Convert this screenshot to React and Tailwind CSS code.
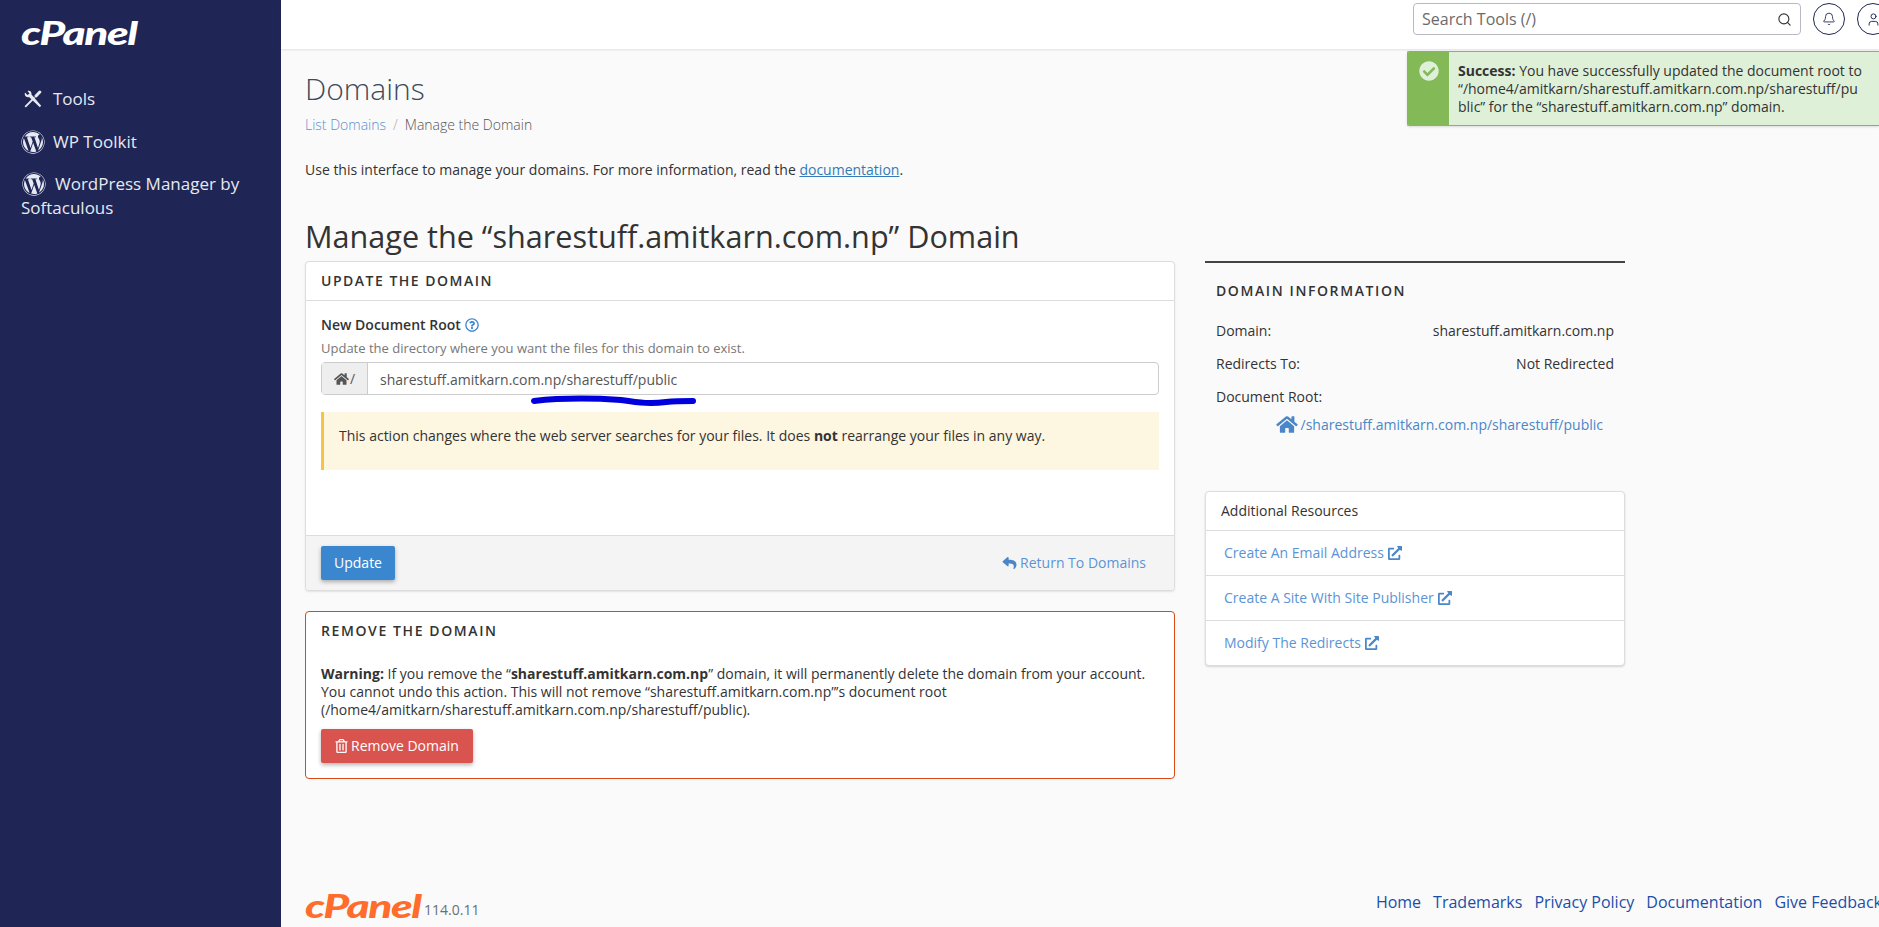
import React from 'react'
import { FaHome, FaWordpress, FaReply, FaExternalLinkAlt, FaCheckCircle, FaRegTrashAlt, FaRegQuestionCircle } from 'react-icons/fa'
import { Search, Bell, User } from 'lucide-react'

function Tools() {
  return (
    <svg width="18" height="18" viewBox="0 0 18 18" fill="none" stroke="currentColor">
      <path d="M1 2.5 L3.5 5 L5.5 3.5 L3.5 1 C5.5 0 8 1.5 7.5 4.5 L17.2 15.8 L15.8 17.2 L5 7 C2 8 0 5 1 2.5 Z" fill="currentColor" stroke="none" />
      <path d="M1.2 16.8 L10.5 7.5" strokeWidth="1.8" />
      <path d="M12 6 L15.8 2" strokeWidth="3" strokeLinecap="round" />
    </svg>
  )
}

const resources = ['Create An Email Address', 'Create A Site With Site Publisher', 'Modify The Redirects']
const footerLinks = ['Home', 'Trademarks', 'Privacy Policy', 'Documentation', 'Give Feedback']

export default function App() {
  return (
    <div className="flex h-[927px] w-[1879px] overflow-hidden bg-[#fafafa] font-['Open_Sans',sans-serif] text-[14px] leading-[18px] text-[#333]">
      {/* Sidebar */}
      <aside className="flex w-[281px] shrink-0 flex-col bg-[#1f2554] px-[21px] pt-[18px] text-[#e6e9f2]">
        <div className="h-[30px] origin-left scale-x-[1.38] font-['Lato',sans-serif] text-[32px] leading-[30px] font-black italic tracking-[-1px] text-white">cPanel</div>
        <nav className="mt-[29px] flex flex-col text-[17px] leading-[24px]">
          <div className="flex h-[43px] items-center gap-[11px] pl-[3px]">
            <Tools />
            <span>Tools</span>
          </div>
          <div className="flex h-[43px] items-center gap-[8px]">
            <FaWordpress className="h-6 w-6" />
            <span>WP Toolkit</span>
          </div>
          <div className="pt-[9px]">
            <FaWordpress className="mr-[9px] ml-[1px] inline-block h-6 w-6 align-[-6px]" />
            WordPress Manager by Softaculous
          </div>
        </nav>
      </aside>

      <div className="relative flex min-w-0 flex-1 flex-col">
        {/* Header */}
        <header className="flex h-[49px] shrink-0 items-start justify-end gap-[12px] bg-white pt-[3px] shadow-[0_1px_2px_rgba(0,0,0,0.1)]">
          <div className="flex h-[32px] w-[388px] items-center justify-between rounded border border-[#b9b9c6] px-[8px] text-[16px] text-[#6b6b6b]">
            <span>Search Tools (/)</span>
            <Search className="h-[15px] w-[15px] text-[#333]" strokeWidth={1.8} />
          </div>
          <div className="flex h-[32px] w-[32px] shrink-0 items-center justify-center rounded-full border border-[#1f2554] text-[#1f2554]">
            <Bell className="h-[14px] w-[14px]" strokeWidth={1.5} />
          </div>
          <div className="-mr-[10px] flex h-[32px] w-[32px] shrink-0 items-center justify-center rounded-full border border-[#1f2554] text-[#1f2554]">
            <User className="h-[15px] w-[15px]" strokeWidth={1.5} />
          </div>
        </header>

        {/* Success notice */}
        <div className="absolute top-[51px] right-0 z-10 flex h-[75px] w-[472px] overflow-hidden rounded-l-[2px] border border-r-0 border-[#83b956] bg-[#dff0d8] shadow-sm">
          <div className="flex w-[41px] shrink-0 justify-center bg-[#83b956] pt-[9px]">
            <FaCheckCircle className="h-[20px] w-[20px] text-[#dff0d8]" />
          </div>
          <p className="pt-[10px] pl-[9px] whitespace-nowrap">
            <b className="font-bold">Success:</b> You have successfully updated the document root to<br />
            “/home4/amitkarn/sharestuff.amitkarn.com.np/sharestuff/pu<br />
            blic” for the “sharestuff.amitkarn.com.np” domain.
          </p>
        </div>

        {/* Content */}
        <main className="flex min-h-0 flex-1 flex-col pl-[24px]">
          <h1 className="mt-[19px] text-[30px] leading-[42px] font-light text-[#3c4a5c]">Domains</h1>
          <div className="mt-[6px] flex gap-[7px] text-[14px] font-light">
            <a className="text-[#5b8fd0]">List Domains</a>
            <span className="text-[#aaa]">/</span>
            <span className="text-[#555]">Manage the Domain</span>
          </div>
          <p className="mt-[27px]">
            Use this interface to manage your domains. For more information, read the <a className="text-[#337ab7] underline">documentation</a>.
          </p>
          <h2 className="mt-[36px] text-[30.6px] leading-[42px] text-[#333]">Manage the “sharestuff.amitkarn.com.np” Domain</h2>

          <div className="mt-[4px] flex items-start gap-[30px]">
            {/* Left column */}
            <div className="flex w-[870px] shrink-0 flex-col gap-[20px]">
              <section className="overflow-hidden rounded border border-[#ddd] bg-white shadow-[0_1px_2px_rgba(0,0,0,0.1)]">
                <div className="flex h-[39px] items-center border-b border-[#ddd] px-[15px] text-[14px] font-semibold tracking-[1.5px] text-[#333]">UPDATE THE DOMAIN</div>
                <div className="h-[234px] px-[15px] pt-[15px]">
                  <div className="flex items-center gap-[4px] font-semibold text-[#333]">
                    New Document Root <FaRegQuestionCircle className="h-[14px] w-[14px] text-[#3c85cf]" />
                  </div>
                  <div className="mt-[5px] text-[13px] text-[#777]">Update the directory where you want the files for this domain to exist.</div>
                  <div className="relative mt-[5px] flex h-[33px] rounded border border-[#ccc]">
                    <div className="flex w-[46px] items-center justify-center gap-[1px] border-r border-[#ccc] bg-[#eee] text-[#555]">
                      <FaHome className="h-[14px] w-[15px]" /><span>/</span>
                    </div>
                    <div className="flex items-center pt-[2px] pl-[12px] text-[14px] text-[#555]">sharestuff.amitkarn.com.np/sharestuff/public</div>
                    <svg className="absolute top-[31px] left-[209px]" width="166" height="14" viewBox="0 0 166 14" fill="none">
                      <path d="M3 7 C 30 4, 60 4, 90 6 C 110 9, 120 10, 135 8 C 145 7, 155 7, 162 7" stroke="#0000dc" strokeWidth="6" strokeLinecap="round" />
                    </svg>
                  </div>
                  <div className="mt-[17px] h-[58px] border-l-[3px] border-[#f6c344] bg-[#fdf6e0] pt-[15px] pl-[15px] text-[14px]">
                    This action changes where the web server searches for your files. It does <b className="font-bold">not</b> rearrange your files in any way.
                  </div>
                </div>
                <div className="flex h-[55px] items-center justify-between border-t border-[#ddd] bg-[#f4f4f4] pr-[28px] pl-[15px]">
                  <button className="h-[34px] w-[74px] rounded-[2px] bg-[#3a87cf] text-white shadow-[0_2px_4px_rgba(0,0,0,0.3)]">Update</button>
                  <a className="flex items-center gap-[3px] text-[#5b94d6]"><FaReply className="h-[14px] w-[15px] text-[#4a86c8]" />Return To Domains</a>
                </div>
              </section>

              <section className="h-[168px] rounded border border-[#d84a12] bg-white px-[15px] pt-[10px]">
                <div className="text-[14px] font-semibold tracking-[1.6px] text-[#333]">REMOVE THE DOMAIN</div>
                <p className="mt-[25px]">
                  <b className="font-bold">Warning:</b> If you remove the “<b className="font-bold">sharestuff.amitkarn.com.np</b>” domain, it will permanently delete the domain from your account. You cannot undo this action. This will not remove “sharestuff.amitkarn.com.np”’s document root (/home4/amitkarn/sharestuff.amitkarn.com.np/sharestuff/public).
                </p>
                <button className="mt-[10px] flex h-[34px] w-[152px] items-center justify-center gap-[3px] rounded-[2px] bg-[#d9534f] text-white shadow-[0_2px_4px_rgba(0,0,0,0.3)]">
                  <FaRegTrashAlt className="h-[14px] w-[13px]" />Remove Domain
                </button>
              </section>
            </div>

            {/* Right column */}
            <div className="flex w-[420px] shrink-0 flex-col">
              <div className="border-t-2 border-[#444] px-[11px] pt-[19px]">
                <div className="text-[14px] font-semibold tracking-[1.6px] text-[#333]">DOMAIN INFORMATION</div>
                <div className="mt-[22px] flex justify-between"><span>Domain:</span><span>sharestuff.amitkarn.com.np</span></div>
                <div className="mt-[15px] flex justify-between"><span>Redirects To:</span><span>Not Redirected</span></div>
                <div className="mt-[15px]">Document Root:</div>
                <div className="mt-[9px] flex items-center justify-end gap-[3px] pr-[11px] text-[#4a86c8]">
                  <FaHome className="h-[19px] w-[22px]" /><span>/sharestuff.amitkarn.com.np/sharestuff/public</span>
                </div>
              </div>
              <div className="mt-[57px] overflow-hidden rounded border border-[#ddd] bg-white shadow-[0_1px_2px_rgba(0,0,0,0.15)]">
                <div className="flex h-[38px] items-center px-[15px]">Additional Resources</div>
                {resources.map((r) => (
                  <div key={r} className="flex h-[45px] items-center gap-[4px] border-t border-[#ddd] px-[18px] text-[#5b94d6]">
                    {r}<FaExternalLinkAlt className="h-[14px] w-[14px] text-[#4a86c8]" />
                  </div>
                ))}
              </div>
            </div>
          </div>

          {/* Footer */}
          <footer className="mt-auto flex h-[44px] items-end justify-between">
            <div className="flex items-end text-[#66707c]">
              <span className="mb-[6px] block w-[119px] origin-left scale-x-[1.38] font-['Lato',sans-serif] text-[32px] leading-[30px] font-black italic tracking-[-1px] text-[#ff6c2c]">cPanel</span>
              <span className="mb-[8px]">114.0.11</span>
            </div>
            <nav className="-mr-[3px] mb-[13px] flex gap-[12px] text-[16px] leading-[24px] whitespace-nowrap text-[#1a4fa8]">
              {footerLinks.map((l) => <a key={l}>{l}</a>)}
            </nav>
          </footer>
        </main>
      </div>
    </div>
  )
}
